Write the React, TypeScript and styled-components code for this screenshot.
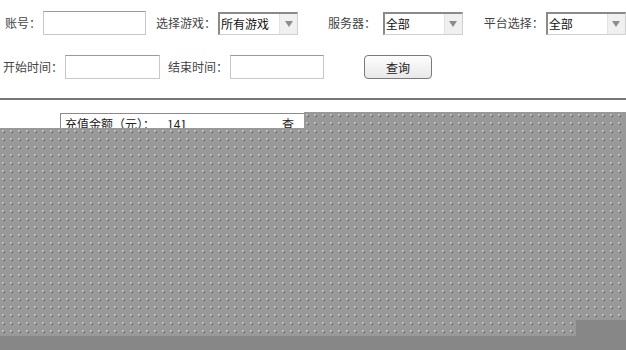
import styled, { createGlobalStyle } from "styled-components";

const Global = createGlobalStyle`
  body {
    margin: 0;
    background: #fff;
    font-family: "Noto Sans CJK SC", "Microsoft YaHei", sans-serif;
    font-size: 12px;
    color: #333;
  }
`;

const Page = styled.div`
  position: relative;
  width: 626px;
  height: 350px;
  overflow: hidden;
`;

const Row = styled.div<{ $top: number }>`
  display: flex;
  align-items: center;
  height: 24px;
  padding-top: ${(p) => p.$top}px;
`;

const Label = styled.span<{ $ml: number }>`
  margin-left: ${(p) => p.$ml}px;
  margin-right: 2px;
  white-space: nowrap;
  line-height: 24px;
  color: #444;
`;

const Input = styled.div<{ $w: number }>`
  box-sizing: border-box;
  width: ${(p) => p.$w}px;
  height: 24px;
  border: 1px solid #c8c8c8;
  border-top-color: #9a9a9a;
  background: #fff;
`;

const Select = styled.div`
  box-sizing: border-box;
  display: flex;
  align-items: center;
  width: 80px;
  height: 23px;
  border: 1px solid #d0d0d0;
  border-top: 2px solid #8a8a8a;
  border-left: 2px solid #8a8a8a;
  background: #fff;
  color: #111;
  padding-left: 1px;
`;

const SelectText = styled.span`
  flex: 1;
  line-height: 18px;
`;

const Arrow = styled.span`
  display: flex;
  align-items: center;
  justify-content: center;
  width: 17px;
  height: 100%;
  background: #f0f0f0;
  border-left: 1px solid #e2e2e2;
  &::after {
    content: "";
    border-left: 4px solid transparent;
    border-right: 4px solid transparent;
    border-top: 6px solid #8c8c8c;
  }
`;

const Button = styled.button`
  box-sizing: border-box;
  margin-left: 40px;
  width: 68px;
  height: 24px;
  border: 1px solid #7a7a7a;
  border-radius: 4px;
  background: linear-gradient(#fdfdfd, #e8e8e8);
  font-family: inherit;
  font-size: 12px;
  color: #222;
  padding: 0;
`;

const Rule = styled.div`
  margin-top: 19px;
  height: 2px;
  background: #777;
`;

const Box = styled.div`
  margin: 13px 0 0 60px;
  width: 600px;
  height: 22px;
  border-top: 1px solid #8a8a8a;
  border-left: 1px solid #8a8a8a;
  display: flex;
  align-items: flex-start;
  padding: 0 0 0 4px;
  line-height: 20px;
  color: #222;
`;

const Amount = styled.span`
  margin-left: 12px;
`;

const Cut = styled.span`
  margin-left: 95px;
`;

const Mask = styled.div<{ $x: number; $y: number; $w: number; $h: number; $dark?: boolean }>`
  position: absolute;
  left: ${(p) => p.$x}px;
  top: ${(p) => p.$y}px;
  width: ${(p) => p.$w}px;
  height: ${(p) => p.$h}px;
  background-color: ${(p) => (p.$dark ? "#878787" : "#999")};
  background-image: ${(p) =>
    p.$dark
      ? "none"
      : "radial-gradient(circle at 3px 3px, #bdbdbd 0.7px, transparent 1px), radial-gradient(circle at 4px 4px, #6f6f6f 0.7px, transparent 1px)"};
  background-size: 8px 8px;
`;

export default function App() {
  return (
    <Page>
      <Global />
      <Row $top={11}>
        <Label $ml={5}>账号：</Label>
        <Input $w={103} />
        <Label $ml={10}>选择游戏：</Label>
        <Select>
          <SelectText>所有游戏</SelectText>
          <Arrow />
        </Select>
        <Label $ml={30}>服务器：</Label>
        <Label $ml={0}>{"\u00a0"}</Label>
        <Select>
          <SelectText>全部</SelectText>
          <Arrow />
        </Select>
        <Label $ml={21}>平台选择：</Label>
        <Select>
          <SelectText>全部</SelectText>
          <Arrow />
        </Select>
      </Row>
      <Row $top={20}>
        <Label $ml={3}>开始时间：</Label>
        <Input $w={95} />
        <Label $ml={8}>结束时间：</Label>
        <Input $w={94} />
        <Button>查询</Button>
      </Row>
      <Rule />
      <Box>
        充值金额（元）：
        <Amount>141</Amount>
        <Cut>查</Cut>
      </Box>
      <Mask $x={304} $y={112} $w={322} $h={16} />
      <Mask $x={0} $y={128} $w={626} $h={208} />
      <Mask $x={576} $y={320} $w={50} $h={16} $dark />
      <Mask $x={0} $y={336} $w={626} $h={14} $dark />
    </Page>
  );
}
